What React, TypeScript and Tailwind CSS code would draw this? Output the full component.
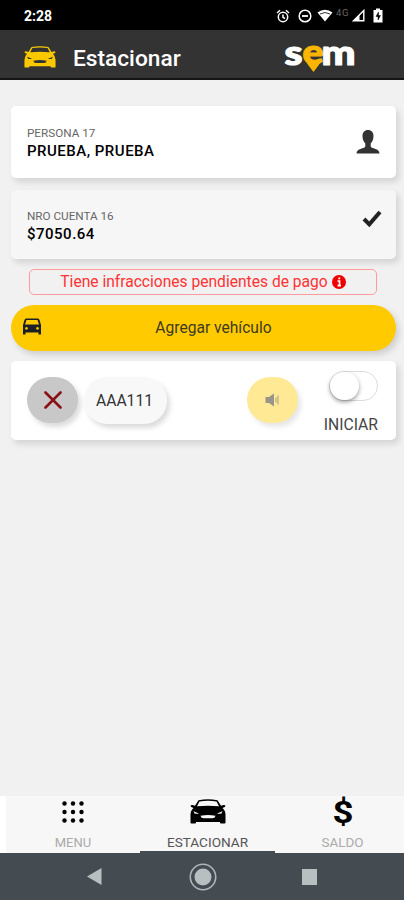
import type { ReactNode } from "react";

const CARD = "ml-[11px] mr-2 rounded-[5px] shadow-[3px_4px_6px_rgba(0,0,0,0.12)]";

function CarFront({ className }: { className: string }) {
  return (
    <svg viewBox="0 0 36 26" preserveAspectRatio="none" className={className} fill="currentColor">
      <path
        fillRule="evenodd"
        d="M8.500 1.200Q18 -0.500 27.500 1.200L31 7Q34.500 5.500 35.500 7Q35.500 8.700 32.500 9.300Q35.500 12 35.500 16.500V24.500Q35.500 25.500 34.500 25.500H31Q30 25.500 30 24.500V24H6V24.500Q6 25.500 5 25.500H1.500Q0.500 25.500 0.500 24.500V16.500Q0.500 12 3.500 9.300Q0.500 8.700 0.500 7Q1.500 5.500 5 7ZM9.500 2.500L7 7.500Q18 6.300 29 7.500L26.500 2.500Q18 1.200 9.500 2.500ZM3.500 12.800L9 15Q8 15.700 4.500 15.200ZM32.500 12.800L27 15Q28 15.700 31.500 15.200ZM10.500 17.300Q18 15.800 25.500 17.300Q25 20 22.500 20H13.500Q11 20 10.500 17.300Z"
      />
    </svg>
  );
}

function StatusBar() {
  return (
    <div className="flex h-[30px] items-center justify-between bg-black pl-6 pr-[21px] text-white">
      <span className="mt-[2px] text-[14px] font-bold leading-4">2:28</span>
      <div className="mt-[1px] flex items-center">
        <svg viewBox="0 0 14 14" className="h-[14px] w-[14px]" fill="none" stroke="currentColor" strokeWidth="1.5">
          <circle cx="7" cy="8" r="4.700" />
          <path d="M7 5.500V8.300L9 9.500M1 4L4 1.300M13 4L10 1.300" />
        </svg>
        <svg viewBox="0 0 14 14" className="ml-[8px] h-[14px] w-[14px]" fill="none" stroke="currentColor" strokeWidth="1.5">
          <circle cx="7" cy="7" r="5.800" />
          <path d="M4 7H10" strokeWidth="1.800" />
        </svg>
        <svg viewBox="0 0 16 13" className="ml-[5px] h-[13px] w-4" fill="currentColor">
          <path d="M0.500 3.500Q8 -2 15.500 3.500L8 12.500Z" />
          <path d="M3 5Q8 2 13 5" fill="none" stroke="#000" strokeWidth="0.800" />
        </svg>
        <span className="-mt-[5px] ml-[3px] w-[14px] text-[9.5px] leading-3 tracking-[0.6px] text-[#666]">4G</span>
        <svg viewBox="0 0 13 13" className="ml-[2px] h-[13px] w-[13px]">
          <path d="M1.500 11.800L11.800 1.500V11.800Z" fill="none" stroke="currentColor" strokeWidth="1.400" />
          <path d="M1 12L7.500 5.500V12Z" fill="currentColor" />
        </svg>
        <svg viewBox="0 0 10 15" className="ml-[8px] h-[15px] w-[10px]">
          <path d="M3 0.500H7V2H9.500V14.500H0.500V2H3Z" fill="currentColor" />
          <path d="M5.500 4L3 8.500H5V12L7.500 7.500H5.500Z" fill="#000" stroke="#000" strokeWidth="0.500" />
        </svg>
      </div>
    </div>
  );
}

function Logo() {
  return (
    <svg viewBox="0 0 76 48" className="mr-[46px] h-12 w-[76px] overflow-visible">
      <path d="M21.500 27C24 33 28 37 31.500 42C35 37 39 33 40.500 28L31 31Z" fill="#f9b500" />
      <g fontFamily="Lato, sans-serif" fontWeight="900" fontSize="35" strokeWidth="1.200" strokeLinejoin="round">
        <text x="2.500" y="34.500" textLength="18" lengthAdjust="spacingAndGlyphs" fill="#fff" stroke="#fff">s</text>
        <text x="20.500" y="33.500" textLength="21" lengthAdjust="spacingAndGlyphs" fill="#f9b500" stroke="#f9b500">e</text>
        <text x="39.500" y="34.500" textLength="34" lengthAdjust="spacingAndGlyphs" fill="#fff" stroke="#fff">m</text>
      </g>
    </svg>
  );
}

function Header() {
  return (
    <header className="flex h-[50px] items-center border-b-2 border-[#151518] bg-[#333]">
      <CarFront className="ml-6 mt-[6px] h-[22px] w-8 text-[#f9c800]" />
      <h1 className="ml-[17px] mt-[9px] flex-1 text-[22.7px] font-medium leading-7 text-white">
        Estacionar
      </h1>
      <Logo />
    </header>
  );
}

type InfoCardProps = { label: string; value: string; className: string; children: ReactNode };

function InfoCard({ label, value, className, children }: InfoCardProps) {
  return (
    <section className={`${CARD} flex justify-between ${className}`}>
      <div className="pl-4">
        <p className="text-[11.7px] leading-[14px] text-[#666]">{label}</p>
        <p className="mt-[2px] text-[15px] font-medium leading-[18px] tracking-[0.5px] text-black">{value}</p>
      </div>
      {children}
    </section>
  );
}

function VehicleCard() {
  return (
    <section className={`${CARD} mt-[10px] flex h-[79px] bg-white`}>
      <button className="ml-4 mt-4 flex h-[46px] w-[51px] items-center justify-center rounded-full bg-[#c8c8c8] shadow-[3px_4px_5px_rgba(0,0,0,0.14)]">
        <svg viewBox="0 0 18 18" className="h-[18px] w-[18px]" fill="none" stroke="#8b1016" strokeWidth="2.600" strokeLinecap="round">
          <path d="M1.500 1.500L16.500 16.500M16.500 1.500L1.500 16.500" />
        </svg>
      </button>
      <div className="ml-[6px] mt-4 flex h-[47px] w-[83px] items-center justify-center rounded-[23px] bg-[#f8f8f8] pr-[2px] text-[15.7px] text-[#333] shadow-[3px_4px_5px_rgba(0,0,0,0.14)]">
        AAA111
      </div>
      <button className="ml-auto mt-4 flex h-[46px] w-[51px] items-center justify-center rounded-full bg-[#ffe994] shadow-[3px_4px_5px_rgba(0,0,0,0.1)]">
        <svg viewBox="0 0 16 14" className="mr-[2px] h-[14px] w-4 text-[#999589]" fill="currentColor">
          <path d="M1.500 4H5L10 0.500V13.500L5 10H1.500Z" />
          <path d="M12 4.500V9.500M14 2.500V11.500" fill="none" stroke="currentColor" strokeWidth="0.900" />
        </svg>
      </button>
      <div className="ml-[25px] mr-[18px] flex w-[55px] flex-col items-end">
        <div className="mt-[10px] h-[30px] w-[49px] rounded-full border border-[#dcdcdc] bg-white">
          <div className="h-7 w-[29px] rounded-full bg-white shadow-[0_2px_4px_rgba(0,0,0,0.4)]" />
        </div>
        <span className="mt-[14px] text-[15.7px] leading-5 text-[#444]">INICIAR</span>
      </div>
    </section>
  );
}

function BottomNav() {
  return (
    <nav className="flex h-[57px] border-l-[6px] border-white bg-[#f7f7f7] text-[13px] leading-4">
      <div className="flex w-[134px] shrink-0 flex-col items-center text-[#aaa]">
        <svg viewBox="0 0 22 22" className="mt-[5px] h-[22px] w-[22px]" fill="#000">
          {[2.5, 11, 19.5].map((y) =>
            [2.5, 11, 19.5].map((x) => <circle key={`${x}-${y}`} cx={x} cy={y} r="2.200" />)
          )}
        </svg>
        <span className="mt-[12px]">MENU</span>
      </div>
      <div className="flex w-[135px] shrink-0 flex-col items-center border-b-2 border-[#444c52] text-[#555]">
        <CarFront className="mt-[3px] h-[25px] w-9 text-black" />
        <span className="mt-[10px] text-[13.6px]">ESTACIONAR</span>
      </div>
      <div className="flex w-[129px] shrink-0 flex-col items-center pl-[6px] text-[#aaa]">
        <span className="h-[39px] scale-x-[1.18] text-[31px] font-bold leading-[33px] text-black">$</span>
        <span className="text-[13.4px]">SALDO</span>
      </div>
    </nav>
  );
}

function SystemNav() {
  return (
    <div className="flex h-[47px] items-center bg-[#444c52] pl-[87px]">
      <svg viewBox="0 0 15 17" className="h-[17px] w-[15px]" fill="#b7bfc1">
        <path d="M0 8.500L14.500 0V17Z" />
      </svg>
      <svg viewBox="0 0 28 28" className="ml-[87px] h-7 w-7">
        <circle cx="14" cy="14" r="12.700" fill="none" stroke="#aeb6b9" strokeWidth="1.600" />
        <circle cx="14" cy="14" r="8.500" fill="#b7bfc1" />
      </svg>
      <div className="ml-[85px] h-4 w-[15px] bg-[#b7bfc1]" />
    </div>
  );
}

export default function App() {
  return (
    <div className="flex h-[900px] w-[404px] flex-col overflow-hidden bg-[#f1f1f1] font-['Roboto',sans-serif]">
      <StatusBar />
      <Header />
      <main className="flex flex-1 flex-col">
        <InfoCard label="PERSONA 17" value="PRUEBA, PRUEBA" className="mt-[26px] h-[72px] bg-white pt-5">
          <svg viewBox="0 0 24 24" className="mr-4 mt-1 h-6 w-6" fill="#333">
            <path d="M12 0C8.500 0 6.500 2.500 6.500 6C6.500 10 8 12 9.300 13.500V16.500C8.500 19 0.500 18 0.500 23.500H23.500C23.500 18 15.500 19 14.700 16.500V13.500C16 12 17.500 10 17.500 6C17.500 2.500 15.500 0 12 0Z" />
          </svg>
        </InfoCard>
        <InfoCard label="NRO CUENTA 16" value="$7050.64" className="mt-3 h-[69px] bg-[#f6f6f6] pt-[19px]">
          <svg viewBox="0 0 20 18" className="mr-[14px] mt-[1px] h-[18px] w-5" fill="none" stroke="#222" strokeWidth="4">
            <path d="M2 9L7.300 14.300L18 2" />
          </svg>
        </InfoCard>
        <div className="ml-[29px] mt-[10px] flex h-[26px] w-[348px] items-center justify-center rounded-[5px] border border-[#ff9a9a] pt-[2px] text-[15.6px] text-[#f33]">
          Tiene infracciones pendientes de pago
          <svg viewBox="0 0 14 14" className="mb-[2px] ml-1 h-[14px] w-[14px]">
            <circle cx="7" cy="7" r="7" fill="#f00000" />
            <path d="M5.500 6H7.500V10.500M5.500 10.700H9M6.300 3.400H8.200" fill="none" stroke="#fff" strokeWidth="1.700" />
          </svg>
        </div>
        <button className="ml-[11px] mr-2 mt-[10px] flex h-[46px] items-center rounded-full bg-[#ffca00] text-[15.6px] text-[#403a20] shadow-[3px_4px_6px_rgba(0,0,0,0.14)]">
          <svg viewBox="0 0 20 17" className="-mt-[3px] ml-[11px] h-[17px] w-5" fill="#1c2025">
            <path
              fillRule="evenodd"
              d="M4 0.500H16Q17 0.500 17.500 2L19 7V16.500H16.500V14.500H3.500V16.500H1V7L2.500 2Q3 0.500 4 0.500ZM4.500 2L3 6.500H17L15.500 2ZM4.500 9A1.400 1.400 0 1 0 4.510 9ZM15.500 9A1.400 1.400 0 1 0 15.510 9Z"
            />
          </svg>
          <span className="flex-1 pr-[11px] pt-[2px] text-center">Agregar vehículo</span>
        </button>
        <VehicleCard />
      </main>
      <BottomNav />
      <SystemNav />
    </div>
  );
}
